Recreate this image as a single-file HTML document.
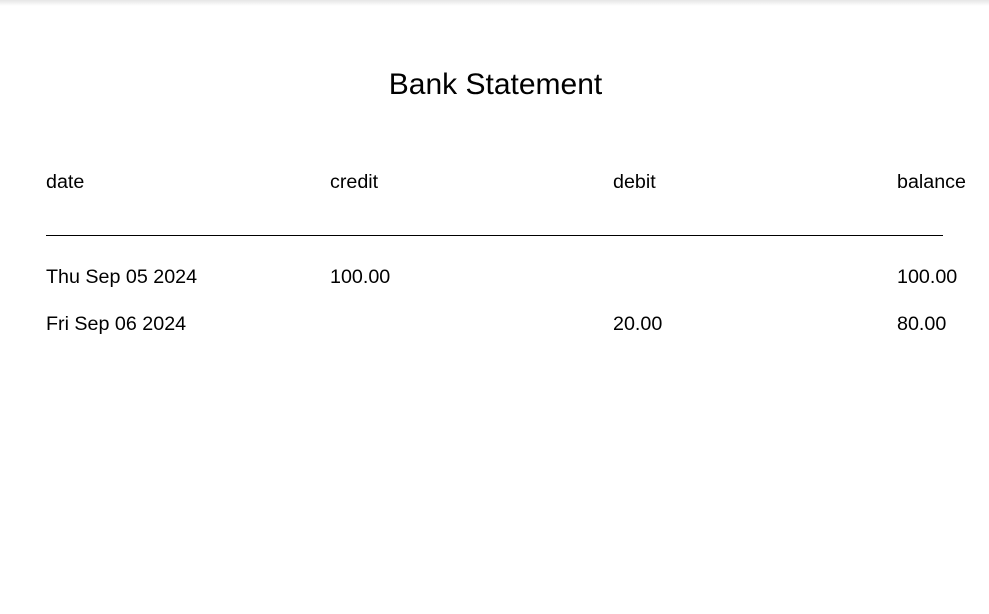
<!DOCTYPE html>
<html><head><style>
html,body{margin:0;padding:0;background:#fff;width:989px;height:614px;overflow:hidden;font-family:"Liberation Sans",Arial,sans-serif;color:#000}
.shadow{position:absolute;left:0;top:0;width:989px;height:6px;background:linear-gradient(#e6e6e6,#fff)}
.t{position:absolute;white-space:nowrap;font-size:19.7px;line-height:20px}
h1{position:absolute;margin:0;left:0;width:991px;text-align:center;top:69px;font-size:30px;font-weight:normal;line-height:32px}
.line{position:absolute;left:46px;top:235px;width:897px;height:1px;background:#000}
</style></head><body>
<div class="shadow"></div>
<h1>Bank Statement</h1>
<div class="t" style="left:46px;top:172px">date</div>
<div class="t" style="left:330px;top:172px">credit</div>
<div class="t" style="left:613px;top:172px">debit</div>
<div class="t" style="left:897px;top:172px">balance</div>
<div class="line"></div>
<div class="t" style="left:46px;top:267px">Thu Sep 05 2024</div>
<div class="t" style="left:330px;top:267px">100.00</div>
<div class="t" style="left:897px;top:267px">100.00</div>
<div class="t" style="left:46px;top:314px">Fri Sep 06 2024</div>
<div class="t" style="left:613px;top:314px">20.00</div>
<div class="t" style="left:897px;top:314px">80.00</div>
</body></html>
